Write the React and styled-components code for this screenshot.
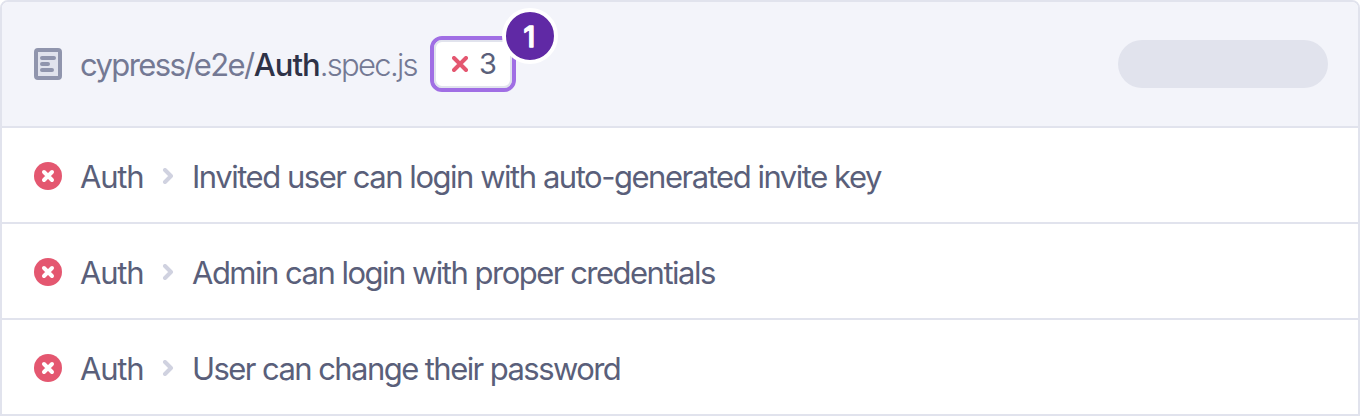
import React from "react";
import styled, { createGlobalStyle } from "styled-components";

const GlobalStyle = createGlobalStyle`
  *, *::before, *::after { box-sizing: border-box; }
  body { margin: 0; background: #fff; }
`;

const Panel = styled.section`
  display: flex;
  flex-direction: column;
  width: 1360px;
  height: 416px;
  border: 2px solid #e1e3ed;
  border-radius: 8px 8px 0 0;
  overflow: hidden;
  font-family: Inter, "Liberation Sans", sans-serif;
  font-size: 31px;
  line-height: 40px;
  color: #5a5f7a;
`;

const Header = styled.header`
  display: flex;
  align-items: center;
  height: 126px;
  padding: 0 30px 0 32px;
  background: #f3f4fa;
  border-bottom: 2px solid #e1e3ed;
`;

const FileName = styled.div`
  display: flex;
  width: 350px;
  padding: 2px 0 0 18px;
  color: #747994;
  white-space: pre;
`;

const NamePart = styled.span`
  font-weight: ${(p) => p.$weight || 400};
  letter-spacing: ${(p) => p.$spacing}px;
  color: ${(p) => p.$color || "inherit"};
`;

const FailureCount = styled.div`
  position: relative;
  width: 86px;
  height: 56px;
  margin-left: 18px;
  border: 4px solid #a06ee4;
  border-radius: 12px;
  background: #e1e3ed;
`;

const CountInner = styled.div`
  display: flex;
  align-items: center;
  gap: 11px;
  height: 100%;
  padding-left: 16px;
  border: 2px solid #e1e3ed;
  border-radius: 8px;
  background: #fff;
  font-size: 29px;
`;

const StepBadge = styled.span`
  position: absolute;
  top: -32px;
  left: 68px;
  width: 56px;
  height: 56px;
  border: 4px solid #fff;
  border-radius: 50%;
  background: #6029a5;
`;

const Placeholder = styled.div`
  width: 210px;
  height: 48px;
  margin-left: auto;
  border-radius: 24px;
  background: #e1e3ed;
`;

const Row = styled.div`
  display: flex;
  align-items: center;
  height: 96px;
  padding: 2px 0 0 32px;
  border-bottom: 2px solid #e1e3ed;
  background: #fff;

  &:last-child {
    height: 94px;
    border-bottom: 0;
  }
`;

const Suite = styled.span`
  width: 90px;
  padding: 2px 0 0 18px;
  letter-spacing: -1.2px;
`;

const Title = styled.span`
  padding: 2px 0 0 8px;
  letter-spacing: ${(p) => p.$spacing}px;
  white-space: nowrap;
`;

const Icon = styled.svg`
  display: block;
  flex: none;
  fill: none;
  stroke-linecap: round;
  stroke-linejoin: round;
`;

const DocumentIcon = () => (
  <Icon width="28" height="32" viewBox="0 0 28 32" stroke="#9095ad" strokeWidth="4">
    <rect x="2" y="2" width="24" height="28" rx="2" fill="#e1e3ed" />
    <path d="M8 10h12M8 16h6M8 22h10" />
  </Icon>
);

const FailedIcon = () => (
  <Icon width="28" height="28" viewBox="0 0 28 28" stroke="#fff" strokeWidth="4">
    <circle cx="14" cy="14" r="14" fill="#e45770" stroke="none" />
    <path d="M10 10l8 8M18 10l-8 8" />
  </Icon>
);

const ChevronIcon = () => (
  <Icon width="12" height="16" viewBox="0 0 12 16" stroke="#d0d2e0" strokeWidth="4">
    <path d="M3 2l6 6-6 6" />
  </Icon>
);

const CrossIcon = () => (
  <Icon width="16" height="16" viewBox="0 0 16 16" stroke="#e45770" strokeWidth="4">
    <path d="M2 2l12 12M14 2L2 14" />
  </Icon>
);

const ChevronSlot = styled.span`
  display: flex;
  justify-content: center;
  width: 32px;
`;

const BadgeNumber = () => (
  <Icon width="48" height="48" viewBox="0 0 48 48">
    <text x="23.3" y="35" textAnchor="middle" fontSize="28" fontWeight="500" fill="#fff" stroke="#fff" strokeWidth="1.4">1</text>
  </Icon>
);

const tests = [
  { title: "Invited user can login with auto-generated invite key", spacing: -1.47 },
  { title: "Admin can login with proper credentials", spacing: -1.51 },
  { title: "User can change their password", spacing: -1.57 },
];

export default function App() {
  return (
    <>
      <GlobalStyle />
      <Panel>
        <Header>
          <DocumentIcon />
          <FileName>
            <NamePart $spacing={-1.6}>cypress/e2e/</NamePart>
            <NamePart $weight={550} $spacing={-0.95} $color="#2e3247">Auth</NamePart>
            <NamePart $weight={300} $spacing={-1.7}>.spec.js</NamePart>
          </FileName>
          <FailureCount>
            <CountInner>
              <CrossIcon />
              <span>3</span>
            </CountInner>
            <StepBadge>
              <BadgeNumber />
            </StepBadge>
          </FailureCount>
          <Placeholder />
        </Header>
        {tests.map((test) => (
          <Row key={test.title}>
            <FailedIcon />
            <Suite>Auth</Suite>
            <ChevronSlot>
              <ChevronIcon />
            </ChevronSlot>
            <Title $spacing={test.spacing}>{test.title}</Title>
          </Row>
        ))}
      </Panel>
    </>
  );
}
